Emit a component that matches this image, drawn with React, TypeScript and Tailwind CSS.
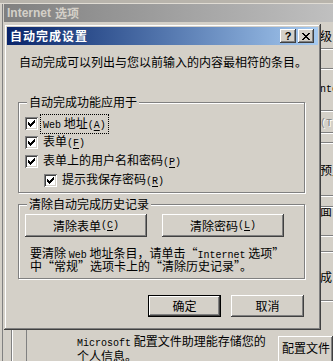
import type { ReactNode } from 'react';

const raised =
  'shadow-[inset_-1px_-1px_#404040,inset_1px_1px_#ffffff,inset_-2px_-2px_#808080,inset_2px_2px_#d4d0c8]';
const etched = 'border border-[#808080] shadow-[inset_1px_1px_#ffffff,1px_1px_#ffffff]';

const L = ({ children }: { children: ReactNode }) => (
  <span className="font-['Liberation_Mono',monospace] text-[10px]">{children}</span>
);

const Key = ({ k }: { k: string }) => (
  <L>
    (<span className="underline underline-offset-2">{k}</span>)
  </L>
);

const Line = () => <div className="h-[2px] shrink-0 border-t border-[#808080] border-b border-b-white" />;

const CheckBox = () => (
  <div className="w-[13px] h-[13px] shrink-0 bg-white shadow-[inset_1px_1px_#808080,inset_-1px_-1px_#ffffff,inset_2px_2px_#404040,inset_-2px_-2px_#d4d0c8] flex items-center justify-center">
    <svg width="7" height="7" viewBox="0 0 7 7" shapeRendering="crispEdges">
      <path d="M0 2h1v1h1v1h1v-1h1v-1h1v-1h1v-1h1v3h-1v1h-1v1h-1v1h-1v1h-1v-1h-1v-1h-1v-1h-1z" fill="#000" />
    </svg>
  </div>
);

const Button = ({ children, className, def }: { children: ReactNode; className: string; def?: boolean }) => (
  <div
    className={`${className} shrink-0 flex items-center justify-center text-[12px] text-black whitespace-nowrap ${
      def
        ? 'shadow-[inset_0_0_0_1px_#000000,inset_-2px_-2px_#404040,inset_2px_2px_#ffffff,inset_-3px_-3px_#808080]'
        : raised
    }`}
  >
    {children}
  </div>
);

const Group = ({ title, children, className }: { title: string; children: ReactNode; className: string }) => (
  <div className={`relative shrink-0 ${etched} ${className}`}>
    <span className="absolute left-[8px] -top-[8px] px-[2px] bg-[#d4d0c8] text-[12px] leading-[14px] whitespace-nowrap">
      {title}
    </span>
    {children}
  </div>
);

const Row = ({ children, indent }: { children: ReactNode; indent?: boolean }) => (
  <div className={`flex items-center gap-[5px] h-[13px] whitespace-nowrap ${indent ? 'ml-[19px]' : ''}`}>
    <CheckBox />
    {children}
  </div>
);

const Strip = ({ h, children }: { h: string; children?: ReactNode }) => (
  <div className={`${h} shrink-0 flex items-center -ml-[1px] whitespace-nowrap overflow-hidden`}>{children}</div>
);

export default function App() {
  return (
    <div className="relative w-[333px] h-[361px] overflow-hidden bg-[#d4d0c8] text-black font-['Noto_Sans_CJK_SC',sans-serif] leading-[14px] text-[12px]">
      {/* desktop strip above */}
      <div className="h-[4px] bg-[#b8b4ac] border-b border-[#e0dcd4]" />

      {/* outer window: Internet 选项 */}
      <div className="absolute left-[2px] top-[4px] right-0 bottom-0 border-l border-[#808080] flex flex-col">
        <div className="h-[18px] shrink-0 ml-[1px] bg-gradient-to-r from-[#808080] to-[#c0c0c0] flex items-center pl-[3px] text-[#d4d0c8] font-bold whitespace-nowrap">
          <span className="font-['Liberation_Sans',sans-serif]">Internet</span>
          <span className="ml-[4px]">选项</span>
        </div>

        <div className="flex-1 flex min-h-0">
          <div className="w-[318px] shrink-0" />
          {/* part right of the dialog */}
          <div className="flex-1 flex flex-col overflow-hidden pt-[2px]">
            <Strip h="h-[24px]">级</Strip>
            <Line />
            <Strip h="h-[18px]" />
            <Line />
            <Strip h="h-[40px]">
              <L>nte</L>
            </Strip>
            <Line />
            <Strip h="h-[20px]">
              <span className="text-[#808080] [text-shadow:1px_1px_#ffffff]">
                <L>(T)</L>
              </span>
            </Strip>
            <Line />
            <Strip h="h-[8px]" />
            <Line />
            <Strip h="h-[51px]">预允</Strip>
            <Line />
            <Strip h="h-[9px]" />
            <Line />
            <Strip h="h-[27px]">
              <span className="-mt-[19px]">
                面<L>(E</L>
              </span>
            </Strip>
            <Line />
            <Strip h="h-[14px]" />
            <Line />
            <Strip h="h-[47px]">
              成 <L>(</L>
            </Strip>
            <Line />
          </div>
        </div>

        {/* part below the dialog */}
        <div className="h-[31px] shrink-0 flex">
          <div className="w-[8px]" />
          <div className="w-[2px] border-l border-[#808080] border-r border-r-white" />
          <div className="w-[13px]" />
          <div className="w-[1px] bg-[#808080]" />
          <div className="w-[50px]" />
          <div className="pt-[5px] leading-[12px] whitespace-nowrap">
            <div>
              <L>Microsoft</L> 配置文件助理能存储您的
            </div>
            <div className="leading-[11px]">个人信息。</div>
          </div>
          <div className="flex-1" />
          <div className={`mt-[6px] w-[55px] h-[30px] ${raised} pl-[4px] pt-[5px] whitespace-nowrap overflow-hidden`}>
            配置文件 <L>(R)</L>
          </div>
        </div>
      </div>

      {/* dialog: 自动完成设置 */}
      <div className="absolute left-[4px] top-[24px] w-[317px] h-[306px] bg-[#d4d0c8] p-[3px] shadow-[inset_-1px_-1px_#404040,inset_1px_1px_#d4d0c8,inset_-2px_-2px_#808080,inset_2px_2px_#ffffff] flex flex-col">
        <div className="h-[18px] shrink-0 bg-gradient-to-r from-[#0a246a] to-[#a6caf0] flex items-center pl-[3px] pr-[4px]">
          <span className="text-white font-bold tracking-[1px] whitespace-nowrap">自动完成设置</span>
          <div className="ml-auto flex gap-[2px]">
            <div className={`w-[16px] h-[14px] bg-[#d4d0c8] ${raised} flex items-center justify-center font-['Liberation_Sans',sans-serif] font-bold text-[11px] leading-none`}>
              ?
            </div>
            <div className={`w-[16px] h-[14px] bg-[#d4d0c8] ${raised} flex items-center justify-center`}>
              <svg width="8" height="7" viewBox="0 0 8 7" shapeRendering="crispEdges">
                <path d="M0 0h2v1h1v1h2v-1h1v-1h2v1h-1v1h-1v1h-1v1h1v1h1v1h1v1h-2v-1h-1v-1h-2v1h-1v1h-2v-1h1v-1h1v-1h1v-1h-1v-1h-1v-1h-1z" fill="#000" />
              </svg>
            </div>
          </div>
        </div>

        <div className="flex-1 flex flex-col pl-[11px] pr-[13px] pb-[10px]">
          <p className="mt-[10px] ml-[1px] h-[14px] leading-[14px] whitespace-nowrap">
            自动完成可以列出与您以前输入的内容最相符的条目。
          </p>

          <Group title="自动完成功能应用于" className="mt-[33px] h-[91px] pt-[14px] pl-[6px]">
            <div className="flex flex-col gap-[6px]">
              <Row>
                <span className="outline outline-1 outline-dotted outline-black outline-offset-[1px] px-[1px] -ml-[1px] leading-[13px]">
                  <L>Web</L> 地址<Key k="A" />
                </span>
              </Row>
              <Row>
                <span>
                  表单<Key k="F" />
                </span>
              </Row>
              <Row>
                <span>
                  表单上的用户名和密码<Key k="P" />
                </span>
              </Row>
              <Row indent>
                <span>
                  提示我保存密码<Key k="R" />
                </span>
              </Row>
            </div>
          </Group>

          <Group title="清除自动完成历史记录" className="mt-[11px] h-[75px] pt-[9px] pl-[6px]">
            <div className="flex gap-[15px]">
              <Button className="w-[122px] h-[23px]">
                清除表单<Key k="C" />
              </Button>
              <Button className="w-[122px] h-[23px]">
                清除密码<Key k="L" />
              </Button>
            </div>
            <div className="mt-[9px] ml-[5px] leading-[13px] whitespace-nowrap">
              <div className="h-[13px]">
                要清除 <L>Web</L> 地址条目，请单击“<L>Internet</L> 选项”
              </div>
              <div className="h-[13px]">中“常规”选项卡上的“清除历史记录”。</div>
            </div>
          </Group>

          <div className="mt-auto flex justify-end gap-[10px] pr-[1px]">
            <Button className="w-[73px] h-[22px]" def>
              确定
            </Button>
            <Button className="w-[73px] h-[22px]">取消</Button>
          </div>
        </div>
      </div>
    </div>
  );
}
